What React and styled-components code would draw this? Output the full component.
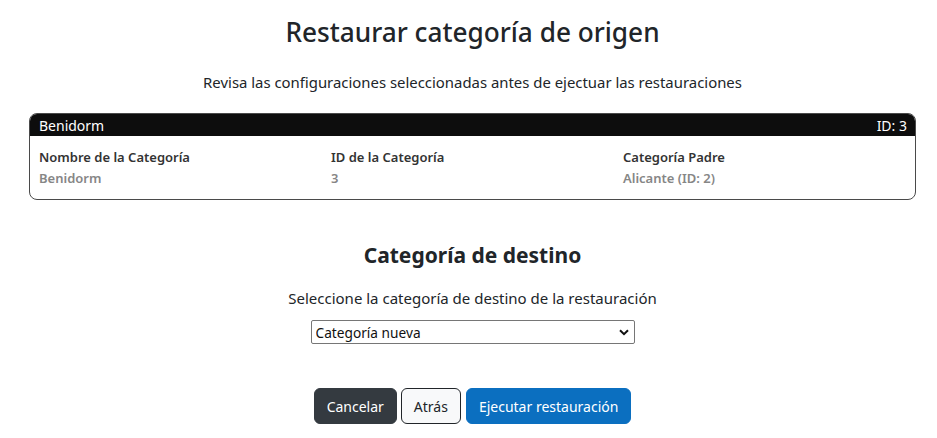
import React from "react";
import styled, { createGlobalStyle } from "styled-components";

const Global = createGlobalStyle`
  html, body { margin: 0; padding: 0; background: #fff; }
  body { font-family: "Noto Sans", "Open Sans", sans-serif; color: #212529; }
  * { box-sizing: border-box; }
`;

const Page = styled.div`
  padding: 0 21px 0 29px;
  display: flex;
  flex-direction: column;
  align-items: center;
`;

const Title = styled.h1`
  margin: 14px 0 0;
  font-size: 26.2px;
  line-height: 36px;
  font-weight: 500;
  color: #212529;
`;

const Lead = styled.p`
  margin: 22px 0 0;
  font-size: 14.9px;
  line-height: 20px;
  color: #212529;
`;

const Card = styled.section`
  margin-top: 21px;
  align-self: stretch;
  border: 1px solid #4a4a4a;
  border-radius: 8px;
  overflow: hidden;
`;

const CardHeader = styled.header`
  display: flex;
  justify-content: space-between;
  align-items: center;
  height: 22px;
  padding: 0 8px 0 9px;
  background: #0d0d0d;
  color: #fff;
  font-size: 14px;
`;

const CardBody = styled.div`
  display: grid;
  grid-template-columns: repeat(3, 1fr);
  padding: 11px 0 11px 9px;
`;

const Field = styled.div`
  display: flex;
  flex-direction: column;
  gap: 1px;
`;

const Label = styled.span`
  font-size: 13px;
  line-height: 20px;
  font-weight: 600;
  color: #333;
`;

const Value = styled.span`
  font-size: 13px;
  line-height: 20px;
  font-weight: 600;
  color: #868686;
`;

const SubTitle = styled.h2`
  margin: 40px 0 0;
  font-size: 21px;
  line-height: 30px;
  font-weight: 700;
  color: #212529;
`;

const Hint = styled.p`
  margin: 18px 0 0;
  font-size: 15px;
  line-height: 20px;
`;

const SelectWrap = styled.div`
  position: relative;
  margin-top: 12px;
  width: 324px;
  height: 24px;
`;

const Select = styled.select`
  appearance: none;
  width: 100%;
  height: 100%;
  border: 1px solid #767676;
  border-radius: 2px;
  background: #fff;
  padding: 0 24px 0 4px;
  font-family: inherit;
  font-size: 13.7px;
  color: #111;
`;

const Chevron = styled.svg`
  position: absolute;
  right: 6px;
  top: 9px;
  pointer-events: none;
`;

const Actions = styled.div`
  display: flex;
  gap: 4px;
  margin-top: 44px;
`;

const Button = styled.button`
  height: 36px;
  padding: 0 12px;
  border-radius: 6px;
  font-family: inherit;
  font-size: 14px;
  border: 1px solid ${p => p.$border};
  background: ${p => p.$bg};
  color: ${p => p.$fg};
  margin-left: ${p => p.$ml || 0}px;
`;

export default function App() {
  return (
    <>
      <Global />
      <Page>
        <Title>Restaurar categoría de origen</Title>
        <Lead>Revisa las configuraciones seleccionadas antes de ejectuar las restauraciones</Lead>
        <Card>
          <CardHeader>
            <span>Benidorm</span>
            <span>ID: 3</span>
          </CardHeader>
          <CardBody>
            <Field>
              <Label>Nombre de la Categoría</Label>
              <Value>Benidorm</Value>
            </Field>
            <Field>
              <Label>ID de la Categoría</Label>
              <Value>3</Value>
            </Field>
            <Field>
              <Label>Categoría Padre</Label>
              <Value>Alicante (ID: 2)</Value>
            </Field>
          </CardBody>
        </Card>
        <SubTitle>Categoría de destino</SubTitle>
        <Hint>Seleccione la categoría de destino de la restauración</Hint>
        <SelectWrap>
          <Select defaultValue="nueva">
            <option value="nueva">Categoría nueva</option>
          </Select>
          <Chevron width="10" height="7" viewBox="0 0 10 7">
            <path d="M1 1.2 L5 5.2 L9 1.2" fill="none" stroke="#111" strokeWidth="2" />
          </Chevron>
        </SelectWrap>
        <Actions>
          <Button $bg="#343a40" $fg="#fff" $border="#343a40">Cancelar</Button>
          <Button $bg="#f8f9fa" $fg="#212529" $border="#212529">Atrás</Button>
          <Button $bg="#0b6fc0" $fg="#fff" $border="#0b6fc0" $ml={1}>Ejecutar restauración</Button>
        </Actions>
      </Page>
    </>
  );
}
